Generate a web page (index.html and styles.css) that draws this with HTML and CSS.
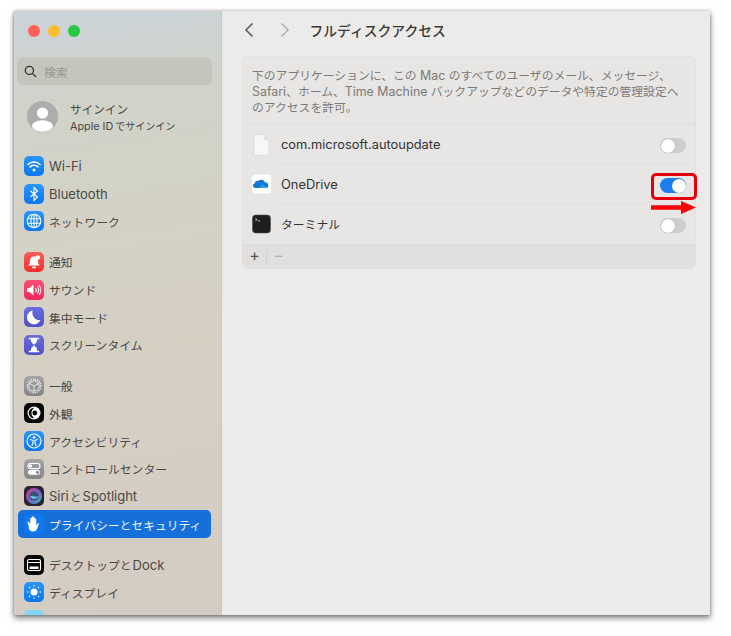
FILE: index.html
```html
<!DOCTYPE html>
<html lang="ja">
<head>
<meta charset="utf-8">
<title>フルディスクアクセス</title>
<link rel="stylesheet" href="styles.css">
</head>
<body>
<div class="window">
  <aside class="sidebar">
    <div class="lights"><span class="light red"></span><span class="light yellow"></span><span class="light green"></span></div>
    <div class="search">
      <svg class="search-icon" viewBox="0 0 14 14"><circle cx="5.8" cy="5.8" r="4.4"/><path d="M9 9l4 4"/></svg>
      <span>検索</span>
    </div>
    <div class="user">
      <svg class="avatar" viewBox="0 0 31 31"><defs><clipPath id="av"><circle cx="15.5" cy="15.5" r="15.5"/></clipPath></defs><circle cx="15.5" cy="15.5" r="15.5" fill="#adadac"/><g clip-path="url(#av)" fill="#fff"><circle cx="15.5" cy="12" r="5.6"/><ellipse cx="15.5" cy="25" rx="10.5" ry="5.8"/></g></svg>
      <div class="user-text"><div class="user-name">サインイン</div><div class="user-sub"><span class="lat-sub">Apple ID</span>でサインイン</div></div>
    </div>
    <nav class="group first">
      <div class="item"><span class="ico blue"><svg viewBox="0 0 20 20"><path d="M4 8.5a8.5 8.5 0 0 1 12 0M6.2 10.8a5.4 5.4 0 0 1 7.6 0" class="w2"/><circle cx="10" cy="14" r="1.5" fill="#fff"/></svg></span><span class="lat">Wi-Fi</span></div>
      <div class="item"><span class="ico blue"><svg viewBox="0 0 20 20"><path d="M6.5 7l7 6-3.5 3.5v-13L13.5 7l-7 6" class="w1"/></svg></span><span class="lat">Bluetooth</span></div>
      <div class="item"><span class="ico blue"><svg viewBox="0 0 20 20"><circle cx="10" cy="10" r="6.8" class="w1"/><ellipse cx="10" cy="10" rx="3" ry="6.8" class="w1"/><path d="M3.5 7.7h13M3.5 12.3h13M10 3.2v13.6" class="w1"/></svg></span>ネットワーク</div>
    </nav>
    <nav class="group">
      <div class="item"><span class="ico redi"><svg viewBox="0 0 20 20"><path d="M10 4.5c-3 0-4 2.400-4 5 0 2-1 3-1.800 4h11.600c-.8-1-1.800-2-1.800-4 0-2.600-1-5-4-5z" fill="#fff"/><circle cx="13.800" cy="5.500" r="2.300" fill="#fff"/><rect x="8" y="14.500" width="4" height="1.800" rx=".9" fill="#fff"/></svg></span>通知</div>
      <div class="item"><span class="ico pink"><svg viewBox="0 0 20 20"><path d="M3 8h2.500L9.500 4.500v11L5.500 12H3z" fill="#fff"/><path d="M11.500 8a3 3 0 0 1 0 4M13.300 6.500a5.500 5.500 0 0 1 0 7M15 5a8 8 0 0 1 0 10" class="w1"/></svg></span>サウンド</div>
      <div class="item"><span class="ico indigo"><svg viewBox="0 0 20 20"><path d="M8.500 3.500a7 7 0 1 0 8 9.500c-4.500 1-9-3-8-9.500z" fill="#fff"/></svg></span>集中モード</div>
      <div class="item"><span class="ico indigo"><svg viewBox="0 0 20 20"><path d="M5.500 3.500h9M5.500 16.500h9" class="w2"/><path d="M7 4v2c0 2 3 3 3 4s-3 2-3 4v2h6v-2c0-2-3-3-3-4s3-2 3-4V4z" fill="#fff"/></svg></span>スクリーンタイム</div>
    </nav>
    <nav class="group">
      <div class="item"><span class="ico gray"><svg viewBox="0 0 20 20"><circle cx="10" cy="10" r="6.800" class="dash"/><circle cx="10" cy="10" r="5.200" class="thin"/><path d="M10 10L5.500 7.500M10 10l4.500-2.500M10 10v5" class="thin"/></svg></span>一般</div>
      <div class="item"><span class="ico black"><svg viewBox="0 0 20 20"><circle cx="10" cy="10" r="6.500" fill="#fff"/><path d="M10 4.700a5.300 5.300 0 0 0 0 10.600c-1-1.800-2.600-2.600-2.600-5.300s1.600-3.500 2.600-5.300z" fill="#000"/><circle cx="10.800" cy="10" r="2.400" fill="#000"/></svg></span>外観</div>
      <div class="item"><span class="ico blue"><svg viewBox="0 0 20 20"><circle cx="10" cy="10" r="7" class="w1"/><circle cx="10" cy="6.500" r="1.300" fill="#fff"/><path d="M6 8.500l3 .8v2.500L7.800 15M14 8.500l-3 .8v2.500l1.200 3.200" class="w1"/></svg></span>アクセシビリティ</div>
      <div class="item"><span class="ico gray"><svg viewBox="0 0 20 20"><rect x="4" y="4.500" width="12" height="5" rx="2.500" class="w1"/><circle cx="6.500" cy="7" r="1.700" fill="#fff"/><rect x="4" y="10.800" width="12" height="5" rx="2.500" fill="#fff"/><circle cx="13.500" cy="13.300" r="1.600" fill="#8e8e90"/></svg></span>コントロールセンター</div>
      <div class="item"><span class="ico siri"><svg viewBox="0 0 20 20"><defs><linearGradient id="sg" x1="0" y1="0" x2="1" y2="1"><stop offset="0" stop-color="#d8397e"/><stop offset=".5" stop-color="#7a5cc8"/><stop offset="1" stop-color="#2fc4c0"/></linearGradient></defs><circle cx="10" cy="10" r="8" fill="url(#sg)"/><circle cx="10" cy="10" r="4.500" fill="#34506e"/><path d="M6 10.500c2.500-2 5 1.500 8.500-.5-1.500 4-6.500 4-8.500.5z" fill="#5fc4dc"/></svg></span><span class="lat lat-a">Siri</span>と<span class="lat lat-b">Spotlight</span></div>
      <div class="item selected"><span class="ico blue"><svg viewBox="0 0 20 20"><path d="M4.800 12L3.500 9c-.5-1.100.9-1.800 1.500-.8L6.200 10V4.500c0-1.100 1.500-1.100 1.500 0v4V3c0-1.100 1.600-1.100 1.600 0v5.500V3.700c0-1.100 1.500-1.100 1.500 0v5V5.400c0-1.100 1.500-1.100 1.500 0v6.200l1-1.800c.6-1 1.900-.4 1.500.7l-1.600 4c-.7 1.800-2 3-4.200 3-2.200 0-3.400-1.200-4.200-3z" fill="#fff"/></svg></span>プライバシーとセキュリティ</div>
    </nav>
    <nav class="group">
      <div class="item"><span class="ico black"><svg viewBox="0 0 20 20"><rect x="3.500" y="4.500" width="13" height="11" rx="1.500" class="w1"/><path d="M4 7.500h12" class="w1"/><rect x="5.500" y="11.500" width="9" height="2.500" fill="#fff"/></svg></span>デスクトップと<span class="lat lat-b">Dock</span></div>
      <div class="item"><span class="ico blue"><svg viewBox="0 0 20 20"><circle cx="10" cy="10" r="3.500" fill="#fff"/><path d="M10 3v1.500M10 15.500V17M3 10h1.500M15.500 10H17M5 5l1.100 1.100M13.900 13.900L15 15M5 15l1.100-1.100M13.900 6.100L15 5" class="w1"/></svg></span>ディスプレイ</div>
      <div class="item"><span class="ico sky"></span></div>
    </nav>
  </aside>
  <main class="main">
    <header class="toolbar">
      <svg class="chev" viewBox="0 0 10 16"><path d="M8.500 1.500L2 8l6.500 6.500"/></svg>
      <svg class="chev dim" viewBox="0 0 10 16"><path d="M1.500 1.500L8 8l-6.500 6.500"/></svg>
      <h1 class="title">フルディスクアクセス</h1>
    </header>
    <section class="panel">
      <p class="desc">下のアプリケーションに、この<span class="lat-d">Mac</span>のすべてのユーザのメール、メッセージ、<br><span class="lat-e">Safari</span>、ホーム、<span class="lat-e">Time Machine</span> バックアップなどのデータや特定の管理設定へ<br>のアクセスを許可。</p>
      <div class="row">
        <svg class="app doc" viewBox="0 0 20 24"><path d="M2 1h11l5 5.500V23H2z" fill="#f7f7f6" stroke="#d9d9d7" stroke-width=".7"/><path d="M13 1v5.500h5z" fill="#e2e2e0" stroke="#d9d9d7" stroke-width=".5"/></svg>
        <span class="label lat-l">com.microsoft.autoupdate</span>
        <span class="toggle"></span>
      </div>
      <div class="row">
        <svg class="app" viewBox="0 0 20 20"><rect width="20" height="20" rx="4" fill="#fff"/><path d="M3.500 14.300a2.600 2.600 0 0 1-.6-5.100 3 3 0 0 1 3.800-2.300 4 4 0 0 1 6.800 1.300 3.100 3.100 0 0 1 3.600 3 3 3 0 0 1-1.800 3.100z" fill="#0f78d4"/><path d="M7 14.300l4-4.400 5.600 4.100-.7.300z" fill="#2c9de8"/></svg>
        <span class="label lat-l">OneDrive</span>
        <span class="toggle on"></span>
      </div>
      <div class="row">
        <svg class="app" viewBox="0 0 20 20"><rect x=".5" y=".5" width="19" height="19" rx="3.500" fill="#1e1e1e" stroke="#555" stroke-width=".6"/><path d="M3.500 4l2 1.300-2 1.300M6.200 6.800h2.300" fill="none" stroke="#eee" stroke-width=".8"/></svg>
        <span class="label ja-l">ターミナル</span>
        <span class="toggle"></span>
      </div>
      <footer class="panel-foot">
        <span class="tool">+</span><span class="tool-sep"></span><span class="tool off">−</span>
      </footer>
    </section>
  </main>
  <div class="marker"></div>
  <svg class="arrow" viewBox="0 0 45 13"><path d="M0 4.200h30V0l15 6.500-15 6.500V8.800H0z" fill="#f00"/></svg>
</div>
</body>
</html>
```
FILE: styles.css
```css
* { box-sizing: border-box; }
html, body { margin: 0; height: 100%; background: #fff; }
body {
  padding: 11px 21px 0 14px;
  overflow: hidden;
  font-family: Inter, "Noto Sans CJK JP", sans-serif;
  font-size: 13px;
}
.window {
  position: relative;
  display: flex;
  height: 604px;
  box-shadow: 0 3px 6px rgba(0,0,0,.5), 0 0 3px rgba(0,0,0,.25);
}
.sidebar {
  width: 208px;
  flex: none;
  overflow: hidden;
  padding-top: 14px;
  background: linear-gradient(172deg, #cbd3da 0, #d1d3c9 16%, #d5d1c4 45%, #d6cfc3 60%, #d4ccc3 100%);
  border-right: 1px solid #c9c5bf;
  color: #4a4744;
}
.lights { display: flex; gap: 8px; padding-left: 14px; }
.light { width: 12px; height: 12px; border-radius: 50%; }
.red { background: #ff5f57; }
.yellow { background: #febc2e; }
.green { background: #28c840; }
.search {
  display: flex;
  align-items: center;
  gap: 7px;
  width: 195px;
  height: 28px;
  margin: 20px 0 0 3px;
  padding-left: 7px;
  border-radius: 6px;
  background: #c4c5bc;
  color: #97978f;
  font-size: 11.800px;
}
.search-icon { width: 13px; height: 13px; fill: none; stroke: #333; stroke-width: 1.4; }
.user { display: flex; align-items: center; gap: 12px; height: 31px; margin-top: 16px; padding-left: 13px; }
.avatar { width: 31px; height: 31px; flex: none; }
.user-text { padding-top: 4px; }
.user-name { font-size: 11.600px; line-height: 16px; }
.user-sub { font-size: 10px; line-height: 16px; }
.lat-sub { font-size: 10.800px; margin-right: 2px; }
.group { margin-top: 13px; }
.group.first { margin-top: 20px; }
.item {
  display: flex;
  align-items: center;
  gap: 5px;
  height: 27.7px;
  margin-left: 4px;
  width: 193px;
  padding-left: 6px;
  border-radius: 5px;
  white-space: nowrap;
  font-size: 11.800px;
}
.lat { font-size: 13px; }
.lat-a { margin-right: -4px; }
.lat-b { margin-left: -4px; }
.selected { background: #1570dc; color: #f2f6fc; }
.ico {
  width: 20px;
  height: 20px;
  flex: none;
  border-radius: 5px;
  overflow: hidden;
}
.ico svg { display: block; width: 20px; height: 20px; }
.w1 { fill: none; stroke: #fff; stroke-width: 1.1; }
.thin { fill: none; stroke: #fff; stroke-width: .8; }
.w2 { fill: none; stroke: #fff; stroke-width: 1.7; stroke-linecap: round; }
.dash { fill: none; stroke: #fff; stroke-width: 1.2; stroke-dasharray: 1.2 1; }
.blue { background: linear-gradient(#2b95fa, #0a76f0); }
.redi { background: linear-gradient(#fb5f57, #f0302c); }
.pink { background: linear-gradient(#fb4f74, #f0285a); }
.indigo { background: linear-gradient(#6a6ce0, #4f50c8); }
.gray { background: linear-gradient(#a5a5a8, #858589); }
.black { background: #060606; }
.siri { background: #26242c; }
.sky { background: #7fd5f7; }
.selected .blue { background: #0f78ee; }
.main { flex: 1; min-width: 0; padding: 0 14px 0 20px; background: #ecebe9; }
.toolbar { display: flex; align-items: center; height: 38px; margin-bottom: 7px; color: #3b3a39; }
.chev { width: 10px; height: 16px; fill: none; stroke: #555; stroke-width: 1.500; margin-left: 2px; }
.chev.dim { stroke: #b3b2b0; margin-left: 26px; }
.title { margin: 0 0 0 19.500px; font-size: 13.800px; font-weight: 500; }
.panel {
  border: 1px solid #e2e1df;
  border-radius: 6px;
  background: #e7e6e4;
  overflow: hidden;
}
.desc {
  margin: 0;
  height: 67px;
  padding: 11px 9px 0;
  font-size: 11.800px;
  line-height: 15.300px;
  color: #7b7a78;
  white-space: nowrap;
  border-bottom: 1px solid #dfdedc;
}
.lat-d { margin: 0 3.500px; font-size: 12.400px; }
.lat-e { font-size: 12.400px; }
.row { display: flex; align-items: center; height: 40px; padding: 0 9px; position: relative; }
.row + .row::before {
  content: "";
  position: absolute;
  top: 0;
  left: 38px;
  right: 9px;
  height: 1px;
  background: #dfdedc;
}
.app { width: 19px; height: 22px; flex: none; }
.doc { margin-top: 2px; }
.label { margin-left: 10px; flex: 1; color: #333; }
.lat-l { font-size: 12.850px; padding-top: 1px; }
.ja-l { font-size: 11.800px; margin-top: -1px; }
.toggle {
  position: relative;
  width: 26px;
  height: 15px;
  margin-top: 3px;
  border-radius: 8px;
  background: #cfcecc;
}
.toggle::after {
  content: "";
  position: absolute;
  top: .5px;
  left: .5px;
  width: 14px;
  height: 14px;
  border-radius: 50%;
  background: #fff;
  box-shadow: 0 0 1px rgba(0,0,0,.4);
}
.toggle.on { background: #1c7ff0; }
.toggle.on::after { left: 11.500px; }
.panel-foot {
  display: flex;
  align-items: center;
  height: 24px;
  padding-bottom: 3px;
  background: #e1e0de;
  border-top: 1px solid #dcdbd9;
  color: #555;
}
.tool { width: 23px; text-align: center; font-size: 16px; line-height: 1; }
.tool.off { color: #b5b4b2; }
.tool-sep { width: 1px; height: 14px; margin-top: 3px; background: #d4d3d1; }
.marker {
  position: absolute;
  left: 637px;
  top: 161.500px;
  width: 46px;
  height: 27px;
  border: 3px solid #e60008;
  border-radius: 5px;
}
.arrow { position: absolute; left: 637px; top: 190px; width: 45px; height: 13px; }
```
